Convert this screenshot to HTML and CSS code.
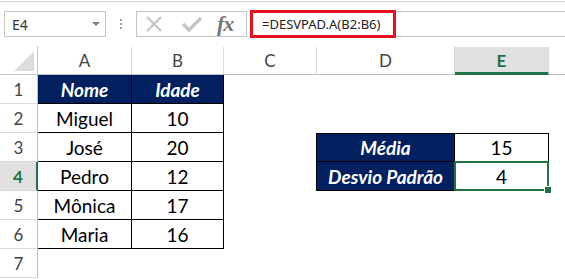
FILE: index.html
```html
<!DOCTYPE html>
<html lang="pt-BR">
<head>
  <meta charset="UTF-8">
  <title>DESVPAD.A - Planilha</title>
  <link rel="stylesheet" href="styles.css">
</head>
<body>
  <div class="ribbon-edge"></div>

  <div class="formula-bar">
    <div class="name-box">
      <span>E4</span>
      <span class="caret"></span>
    </div>
    <div class="grip"><i></i><i></i><i></i></div>
    <div class="fx-box">
      <svg class="icon-cancel" width="18" height="16" viewBox="0 0 18 16">
        <path d="M2 1 L16 15 M16 1 L2 15" stroke="#c4c4c4" stroke-width="2" fill="none"/>
      </svg>
      <svg class="icon-enter" width="20" height="16" viewBox="0 0 20 16">
        <path d="M1 8 L7 14 L19 2" stroke="#c4c4c4" stroke-width="3.5" fill="none"/>
      </svg>
      <span class="fx">fx</span>
    </div>
    <div class="formula">
      <span class="formula-text">=DESVPAD.A(B2:B6)</span>
      <span class="highlight"></span>
    </div>
  </div>

  <div class="sheet">
    <!-- cabeçalho de colunas -->
    <div class="corner"><span class="corner-tri"></span></div>
    <div class="col-head">A</div>
    <div class="col-head">B</div>
    <div class="col-head">C</div>
    <div class="col-head">D</div>
    <div class="col-head active">E</div>
    <div class="col-head last"></div>

    <!-- linha 1 -->
    <div class="row-head">1</div>
    <div class="cell th">Nome</div>
    <div class="cell th">Idade</div>
    <div class="cell"></div>
    <div class="cell"></div>
    <div class="cell"></div>
    <div class="cell"></div>

    <!-- linha 2 -->
    <div class="row-head">2</div>
    <div class="cell td">Miguel</div>
    <div class="cell td">10</div>
    <div class="cell"></div>
    <div class="cell"></div>
    <div class="cell"></div>
    <div class="cell"></div>

    <!-- linha 3 -->
    <div class="row-head">3</div>
    <div class="cell td">José</div>
    <div class="cell td">20</div>
    <div class="cell edge-right"></div>
    <div class="cell th top">Média</div>
    <div class="cell td top">15</div>
    <div class="cell"></div>

    <!-- linha 4 -->
    <div class="row-head active">4</div>
    <div class="cell td">Pedro</div>
    <div class="cell td">12</div>
    <div class="cell edge-right"></div>
    <div class="cell th">Desvio Padrão</div>
    <div class="cell td selected">4<span class="sel-box"></span><span class="sel-handle"></span></div>
    <div class="cell"></div>

    <!-- linha 5 -->
    <div class="row-head">5</div>
    <div class="cell td">Mônica</div>
    <div class="cell td">17</div>
    <div class="cell"></div>
    <div class="cell"></div>
    <div class="cell"></div>
    <div class="cell"></div>

    <!-- linha 6 -->
    <div class="row-head">6</div>
    <div class="cell td">Maria</div>
    <div class="cell td">16</div>
    <div class="cell"></div>
    <div class="cell"></div>
    <div class="cell"></div>
    <div class="cell"></div>

    <!-- linha 7 -->
    <div class="row-head">7</div>
    <div class="cell"></div>
    <div class="cell"></div>
    <div class="cell"></div>
    <div class="cell"></div>
    <div class="cell"></div>
    <div class="cell"></div>
  </div>
</body>
</html>
```

FILE: styles.css
```css
body {
  margin: 0;
  padding: 0;
  background-color: #fff;
  font-family: Lato, "Liberation Sans", sans-serif;
  width: 565px;
  height: 279px;
  overflow: hidden;
}
.ribbon-edge {
  margin-top: 1px;
  height: 1px;
  background-color: #d5d5d5;
}

/* barra de fórmulas */
.formula-bar {
  display: flex;
  align-items: stretch;
  margin-top: 9px;
  height: 26px;
}
.name-box {
  box-sizing: border-box;
  margin-left: 4px;
  width: 102px;
  border: 1px solid #c6c6c6;
  display: flex;
  align-items: center;
  justify-content: space-between;
  padding: 0 4px 0 7px;
  font-family: "Noto Sans", sans-serif;
  font-size: 14px;
  color: #333;
}
.caret {
  width: 0;
  height: 0;
  border-left: 4px solid transparent;
  border-right: 4px solid transparent;
  border-top: 4px solid #7a7a7a;
  margin-right: 1px;
}
.grip {
  width: 30px;
  display: flex;
  flex-direction: column;
  align-items: center;
  justify-content: center;
  gap: 2px;
}
.grip i {
  display: block;
  width: 2px;
  height: 2px;
  background-color: #a0a0a0;
}
.fx-box {
  box-sizing: border-box;
  width: 111px;
  border: 1px solid #c6c6c6;
  display: flex;
  align-items: center;
  padding-left: 8px;
}
.icon-enter {
  margin-left: 19px;
}
.fx {
  margin-left: 15px;
  font-family: "Liberation Serif", serif;
  font-style: italic;
  font-weight: bold;
  font-size: 22px;
  color: #767676;
  letter-spacing: -1px;
  line-height: 1;
}
.formula {
  position: relative;
  flex: 1;
  margin-left: 3px;
  border-top: 1px solid #c6c6c6;
  border-bottom: 1px solid #c6c6c6;
  display: flex;
  align-items: center;
  padding-left: 12px;
  font-family: "Noto Sans", sans-serif;
  font-size: 13px;
  color: #222;
}
.highlight {
  position: absolute;
  left: 0;
  top: -2px;
  width: 146px;
  height: 28px;
  box-sizing: border-box;
  border: 3px solid #e3121e;
}

/* planilha */
.sheet {
  margin-top: 9px;
  display: grid;
  grid-template-columns: 38px 94px 92px 93px 138px 94px 1fr;
  grid-template-rows: repeat(8, 29px);
}
.corner {
  position: relative;
  box-sizing: border-box;
  border-right: 1px solid #c8c8c8;
  border-bottom: 1px solid #c8c8c8;
}
.corner-tri {
  position: absolute;
  right: 3px;
  bottom: 3px;
  width: 0;
  height: 0;
  border-left: 20px solid transparent;
  border-bottom: 20px solid #dcdcdc;
}
.col-head {
  box-sizing: border-box;
  border-right: 1px solid #dadada;
  border-bottom: 1px solid #bcbcbc;
  margin-top: 1px;
  display: flex;
  align-items: center;
  justify-content: center;
  font-size: 17px;
  color: #444;
}
.col-head.last {
  border-right: none;
}
.col-head.active {
  background-color: #e1e1e1;
  border-bottom: 3px solid #217346;
  color: #217346;
  font-weight: bold;
  padding-top: 2px;
}
.row-head {
  box-sizing: border-box;
  border-right: 1px solid #bcbcbc;
  border-bottom: 1px solid #dadada;
  display: flex;
  align-items: center;
  justify-content: center;
  font-size: 17px;
  color: #444;
}
.row-head.active {
  background-color: #e1e1e1;
  border-right: 2px solid #217346;
  color: #217346;
  font-weight: bold;
}
.cell {
  box-sizing: border-box;
  display: flex;
  align-items: center;
  justify-content: center;
  font-size: 19px;
  color: #000;
}
.th {
  background-color: #002060;
  color: #fff;
  font-weight: bold;
  font-style: italic;
  font-size: 19px;
  border-right: 1px solid #000;
  border-bottom: 1px solid #000;
}
.td {
  border-right: 1px solid #000;
  border-bottom: 1px solid #000;
}
.top {
  border-top: 1px solid #000;
}
.edge-right {
  border-right: 1px solid #000;
}
.selected {
  position: relative;
}
.sel-box {
  position: absolute;
  left: -1px;
  top: -1px;
  right: -1px;
  bottom: -1px;
  border: 2px solid #217346;
}
.sel-handle {
  position: absolute;
  right: -4px;
  bottom: -4px;
  width: 6px;
  height: 6px;
  background-color: #217346;
  border: 1px solid #fff;
}
```
